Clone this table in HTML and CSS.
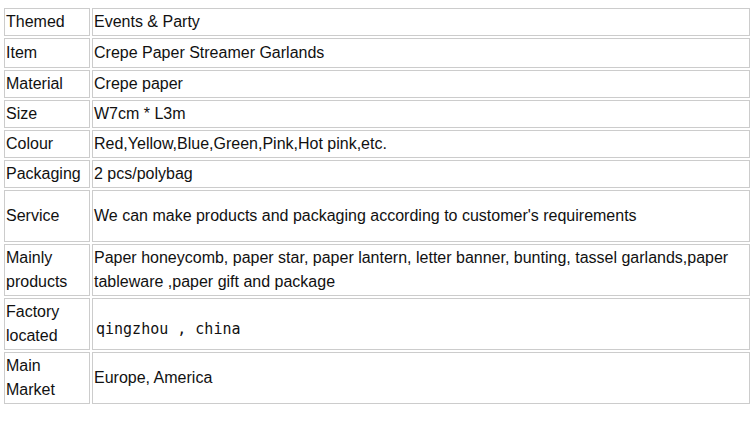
FILE: index.html
```html
<!DOCTYPE html>
<html>
<head>
<meta charset="utf-8">
<link rel="stylesheet" href="styles.css">
</head>
<body>
<table class="spec">
  <colgroup><col class="c-label"><col class="c-value"></colgroup>
  <tr class="r1"><td>Themed</td><td>Events &amp; Party</td></tr>
  <tr class="r1b"><td>Item</td><td>Crepe Paper Streamer Garlands</td></tr>
  <tr class="r1"><td>Material</td><td>Crepe paper</td></tr>
  <tr class="r1"><td>Size</td><td>W7cm * L3m</td></tr>
  <tr class="r1"><td>Colour</td><td>Red,Yellow,Blue,Green,Pink,Hot pink,etc.</td></tr>
  <tr class="r1"><td>Packaging</td><td>2 pcs/polybag</td></tr>
  <tr class="r2"><td>Service</td><td>We can make products and packaging according to customer's requirements</td></tr>
  <tr class="r2"><td>Mainly products</td><td>Paper honeycomb, paper star, paper lantern, letter banner, bunting, tassel garlands,paper tableware ,paper gift and package</td></tr>
  <tr class="r2"><td>Factory located</td><td class="lower"><span class="mono">qingzhou , china</span></td></tr>
  <tr class="r2"><td>Main Market</td><td>Europe, America</td></tr>
</table>
</body>
</html>
```

FILE: styles.css
```css
html, body {
  margin: 0;
  padding: 0;
  background: #ffffff;
}
body {
  font-family: "Liberation Sans", Arial, sans-serif;
  font-size: 16px;
  line-height: 24px;
  color: #111111;
}
.spec {
  margin: 6px 0 0 2px;
  border-collapse: separate;
  border-spacing: 2px;
  table-layout: fixed;
  width: 750px;
}
.c-label { width: 86px; }
.c-value { width: 658px; }
.spec td {
  border: 1px solid #cccccc;
  padding: 1px;
  vertical-align: middle;
  box-sizing: border-box;
}
.r1 td { height: 28px; }
.r1b td { height: 30px; }
.r2 td { height: 52px; }
.spec td.lower { padding-top: 11px; }
.mono {
  font-family: "DejaVu Sans Mono", "Liberation Mono", monospace;
  font-size: 15px;
  padding-left: 2px;
}
```
